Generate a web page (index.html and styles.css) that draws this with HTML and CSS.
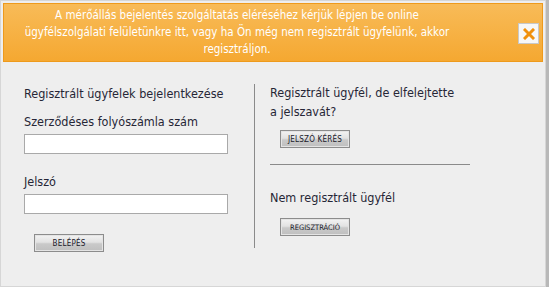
FILE: index.html
```html
<!DOCTYPE html>
<html lang="hu">
<head>
  <meta charset="UTF-8">
  <title>Bejelentkezés</title>
  <link rel="stylesheet" href="styles.css">
</head>
<body>

  <div class="dialog">
    <div class="notice">
      <p class="notice-text">A mérőállás bejelentés szolgáltatás eléréséhez kérjük lépjen be online<br>ügyfélszolgálati felületünkre itt, vagy ha Ön még nem regisztrált ügyfelünk, akkor<br>regisztráljon.</p>
      <button class="close" type="button" aria-label="Bezár">
        <svg width="12" height="12" viewBox="0 0 12 12">
          <path d="M2 2 L10 10 M10 2 L2 10" stroke="#f0900c" stroke-width="3" stroke-linecap="square"/>
        </svg>
      </button>
    </div>

    <div class="content">
      <form class="login">
        <h2>Regisztrált ügyfelek bejelentkezése</h2>
        <label for="account">Szerződéses folyószámla szám</label>
        <input type="text" id="account">
        <label for="password" class="second">Jelszó</label>
        <input type="password" id="password">
        <button type="submit" class="btn btn-login">Belépés</button>
      </form>

      <div class="side">
        <h2 class="forgot">Regisztrált ügyfél, de elfelejtette<br>a jelszavát?</h2>
        <button type="button" class="btn">Jelszó kérés</button>
        <hr>
        <h2 class="new">Nem regisztrált ügyfél</h2>
        <button type="button" class="btn btn-small">Regisztráció</button>
      </div>
    </div>
  </div>

  <div class="page-edge"></div>

</body>
</html>
```

FILE: styles.css
```css
* { margin: 0; padding: 0; box-sizing: border-box; }
body {
  font-family: 'DejaVu Sans Condensed', 'DejaVu Sans', sans-serif;
  background: #c9c9c9;
  display: flex;
  width: 549px;
  height: 287px;
  overflow: hidden;
}
.dialog {
  width: 546px;
  height: 287px;
  background: #eeeeee;
  border: 1px solid #d6d6d6;
  padding: 2px;
}
.notice {
  display: flex;
  align-items: center;
  height: 59px;
  width: 540px;
  background: linear-gradient(#f8bb58, #f5a831);
  border: 1px solid #ee9a1c;
}
.notice-text {
  flex: 1;
  padding: 0 48px 0 0;
  color: #fff;
  font-size: 11.5px;
  line-height: 17px;
  text-align: center;
  white-space: nowrap;
}
.close {
  width: 21px;
  height: 21px;
  margin-right: 3px;
  margin-top: 2px;
  background: #f7f7f7;
  border: 1px solid #c8c8c8;
  display: flex;
  align-items: center;
  justify-content: center;
}
.content {
  display: flex;
  padding: 22px 0 0 21px;
  color: #262636;
}
h2 {
  font-size: 12.5px;
  font-weight: normal;
  line-height: 19px;
}
.login {
  width: 230px;
  display: flex;
  flex-direction: column;
  align-items: flex-start;
}
.login label {
  display: block;
  font-size: 12.5px;
  line-height: 19px;
  margin-top: 9px;
}
.login label.second {
  margin-top: 18px;
}
.login input {
  width: 204px;
  height: 20px;
  margin-top: 3px;
  border: 1px solid #a9a9a9;
  background: #fff;
}
.btn {
  width: 70px;
  height: 18px;
  font-family: 'DejaVu Sans Condensed', 'DejaVu Sans', sans-serif;
  font-size: 8px;
  text-transform: uppercase;
  letter-spacing: 0.2px;
  color: #1a1a2a;
  border: 1px solid #8c8c8c;
  box-shadow: inset 0 0 0 1px #e4e4e4;
  background: linear-gradient(#f3f3f3, #e2e2e2 45%, #c9c9c9 55%, #bfbfbf);
  cursor: pointer;
}
.btn-login {
  margin: 20px 0 0 10px;
}
.btn-small {
  font-size: 7.5px;
  letter-spacing: 0;
}
.side {
  width: 216px;
  height: 164px;
  border-left: 1px solid #8a8a8a;
  padding-left: 15px;
  display: flex;
  flex-direction: column;
  align-items: flex-start;
}
.side h2.forgot {
  white-space: nowrap;
  margin-top: -1px;
}
.side .btn {
  margin: 9px 0 0 10px;
}
.side hr {
  width: 200px;
  border: none;
  border-top: 1px solid #8a8a8a;
  margin-top: 16px;
}
.side h2.new {
  margin-top: 23px;
}
.side .btn-small {
  margin-top: 11px;
}
.page-edge {
  flex: 1;
  background: #b8b8b8;
}
```
